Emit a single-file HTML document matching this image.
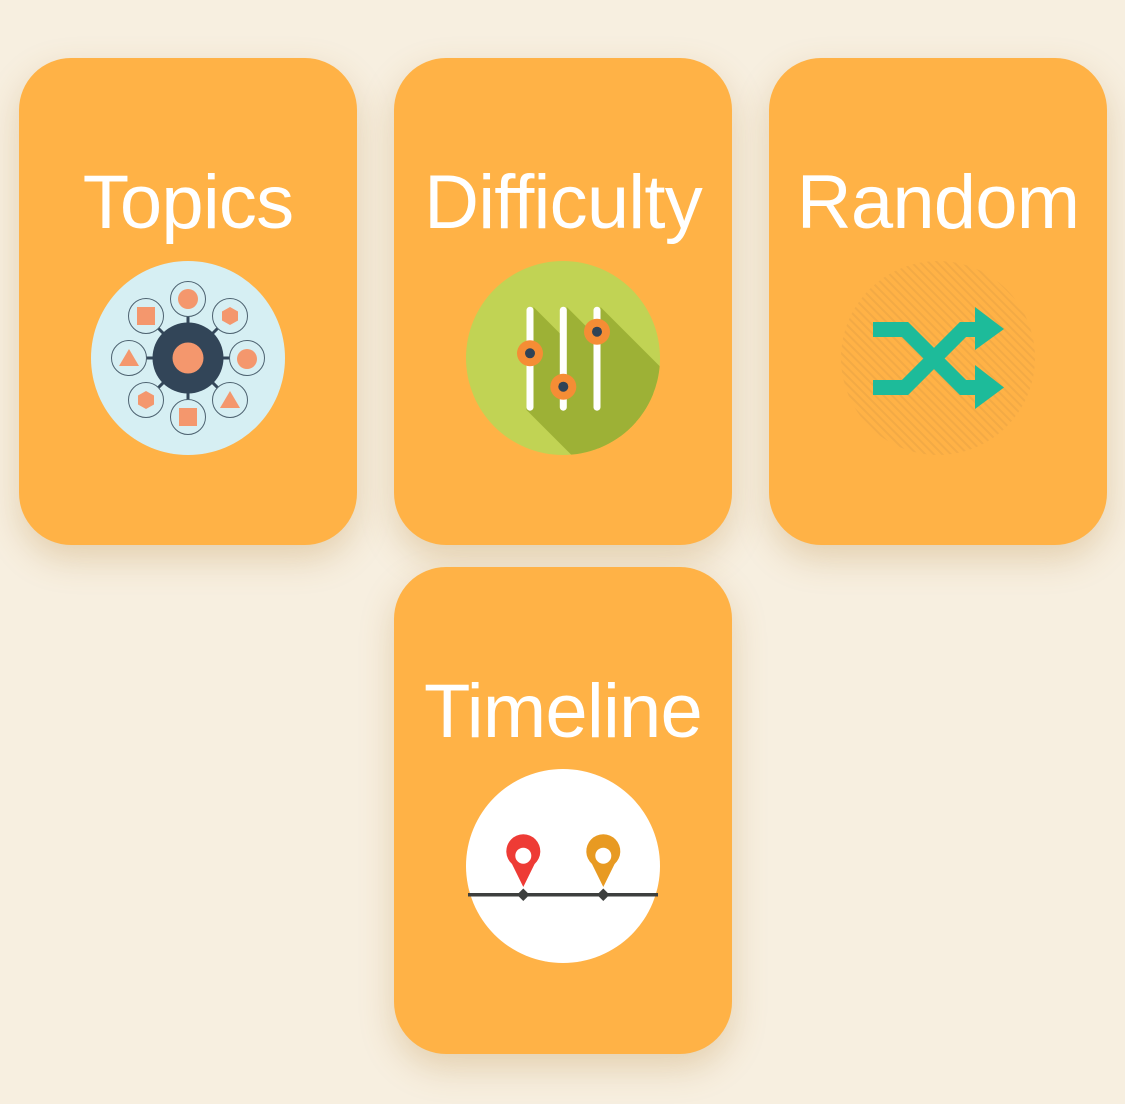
<!DOCTYPE html>
<html><head><meta charset="utf-8"><style>
html,body{margin:0;padding:0;width:1125px;height:1104px;background:#f7efe0;overflow:hidden;font-family:"Liberation Sans",sans-serif}
.card{position:absolute;width:338px;height:487px;background:#ffb246;border-radius:52px;box-shadow:0 14px 34px rgba(180,130,50,.28)}
.t{position:absolute;left:0;right:0;top:100px;text-align:center;color:#fff;font-size:76px;letter-spacing:-0.8px;line-height:90px;white-space:nowrap}
.card svg{position:absolute;left:71px;top:202px}
</style></head><body>
<div class="card" style="left:19px;top:58px"><div class="t">Topics</div>
<svg width="196" height="196" viewBox="0 0 196 196">
<circle cx="98" cy="98" r="97" fill="#d6eff3"/>
<g stroke="#34475a" stroke-width="3">
<line x1="98" y1="98" x2="98" y2="40"/><line x1="98" y1="98" x2="98" y2="156"/>
<line x1="98" y1="98" x2="40" y2="98"/><line x1="98" y1="98" x2="156" y2="98"/>
<line x1="98" y1="98" x2="57" y2="57"/><line x1="98" y1="98" x2="139" y2="57"/>
<line x1="98" y1="98" x2="57" y2="139"/><line x1="98" y1="98" x2="139" y2="139"/>
</g>
<g fill="#d6eff3" stroke="#4d6270" stroke-width="1">
<circle cx="98" cy="39" r="17.5"/><circle cx="98" cy="157" r="17.5"/><circle cx="39" cy="98" r="17.5"/><circle cx="157" cy="98" r="17.5"/>
<circle cx="56" cy="56" r="17.5"/><circle cx="140" cy="56" r="17.5"/><circle cx="56" cy="140" r="17.5"/><circle cx="140" cy="140" r="17.5"/>
</g>
<circle cx="98" cy="98" r="35.5" fill="#324558"/>
<g fill="#f4976d">
<circle cx="98" cy="98" r="15.5"/>
<circle cx="98" cy="39" r="10"/><circle cx="157" cy="99" r="10"/>
<rect x="47" y="47" width="18" height="18"/><rect x="89" y="148" width="18" height="18"/>
<polygon points="140,47 148,51.5 148,60.5 140,65 132,60.5 132,51.5"/>
<polygon points="56,131 64,135.5 64,144.5 56,149 48,144.5 48,135.5"/>
<polygon points="39,89 49,106 29,106"/><polygon points="140,131 150,148 130,148"/>
</g>
</svg></div>

<div class="card" style="left:394px;top:58px"><div class="t">Difficulty</div>
<svg width="196" height="196" viewBox="0 0 196 196">
<defs><clipPath id="c1"><circle cx="98" cy="98" r="97"/></clipPath></defs>
<circle cx="98" cy="98" r="97" fill="#c1d354"/>
<g clip-path="url(#c1)" fill="#9db136">
<polygon points="68.5,47 268.5,247 261.5,350 61.5,150"/>
<polygon points="101.8,47 301.8,247 294.8,350 94.8,150"/>
<polygon points="135.5,47 335.5,247 328.5,350 128.5,150"/>
</g>
<g fill="#fff"><rect x="61.5" y="46.7" width="7" height="104" rx="3.5"/><rect x="94.8" y="46.7" width="7" height="104" rx="3.5"/><rect x="128.5" y="46.7" width="7" height="104" rx="3.5"/></g>
<g fill="#f58d35"><circle cx="65" cy="93.3" r="13"/><circle cx="98.3" cy="126.7" r="13"/><circle cx="132" cy="71.7" r="13"/></g>
<g fill="#2f4356"><circle cx="65" cy="93.3" r="5"/><circle cx="98.3" cy="126.7" r="5"/><circle cx="132" cy="71.7" r="5"/></g>
</svg></div>

<div class="card" style="left:769px;top:58px"><div class="t">Random</div>
<svg width="196" height="196" viewBox="0 0 196 196">
<defs><pattern id="h" width="6" height="6" patternUnits="userSpaceOnUse" patternTransform="rotate(-45)"><rect width="6" height="6" fill="#ffb246"/><rect width="2" height="6" fill="#f3aa45"/></pattern></defs>
<circle cx="98" cy="98" r="97" fill="url(#h)"/>
<g fill="none" stroke="#1dbb9a" stroke-width="15" stroke-linejoin="miter">
<polyline points="33,69.5 65,69.5 123,127.5 137,127.5"/>
<polyline points="33,127.5 65,127.5 123,69.5 137,69.5"/>
</g>
<g fill="#1dbb9a"><polygon points="135,47 164,69 135,90"/><polygon points="135,105 164,127.5 135,149"/></g>
</svg></div>

<div class="card" style="left:394px;top:567px"><div class="t">Timeline</div>
<svg width="196" height="196" viewBox="0 0 196 196" style="top:201px">
<circle cx="98" cy="98" r="97" fill="#fff"/>
<rect x="3" y="125" width="190" height="3.5" fill="#3d3f3e"/>
<polygon points="58.3,120.5 64.5,126.7 58.3,133 52,126.7" fill="#3d3f3e"/>
<polygon points="138.3,120.5 144.5,126.7 138.3,133 132,126.7" fill="#3d3f3e"/>
<path d="M58.3,119 L47,96 A17,17 0 1 1 69.6,96 Z" fill="#ee3b35"/>
<circle cx="58.3" cy="87.7" r="8" fill="#fff"/>
<path d="M138.3,119 L127,96 A17,17 0 1 1 149.6,96 Z" fill="#e89a22"/>
<circle cx="138.3" cy="87.7" r="8" fill="#fff"/>
</svg></div>
</body></html>
